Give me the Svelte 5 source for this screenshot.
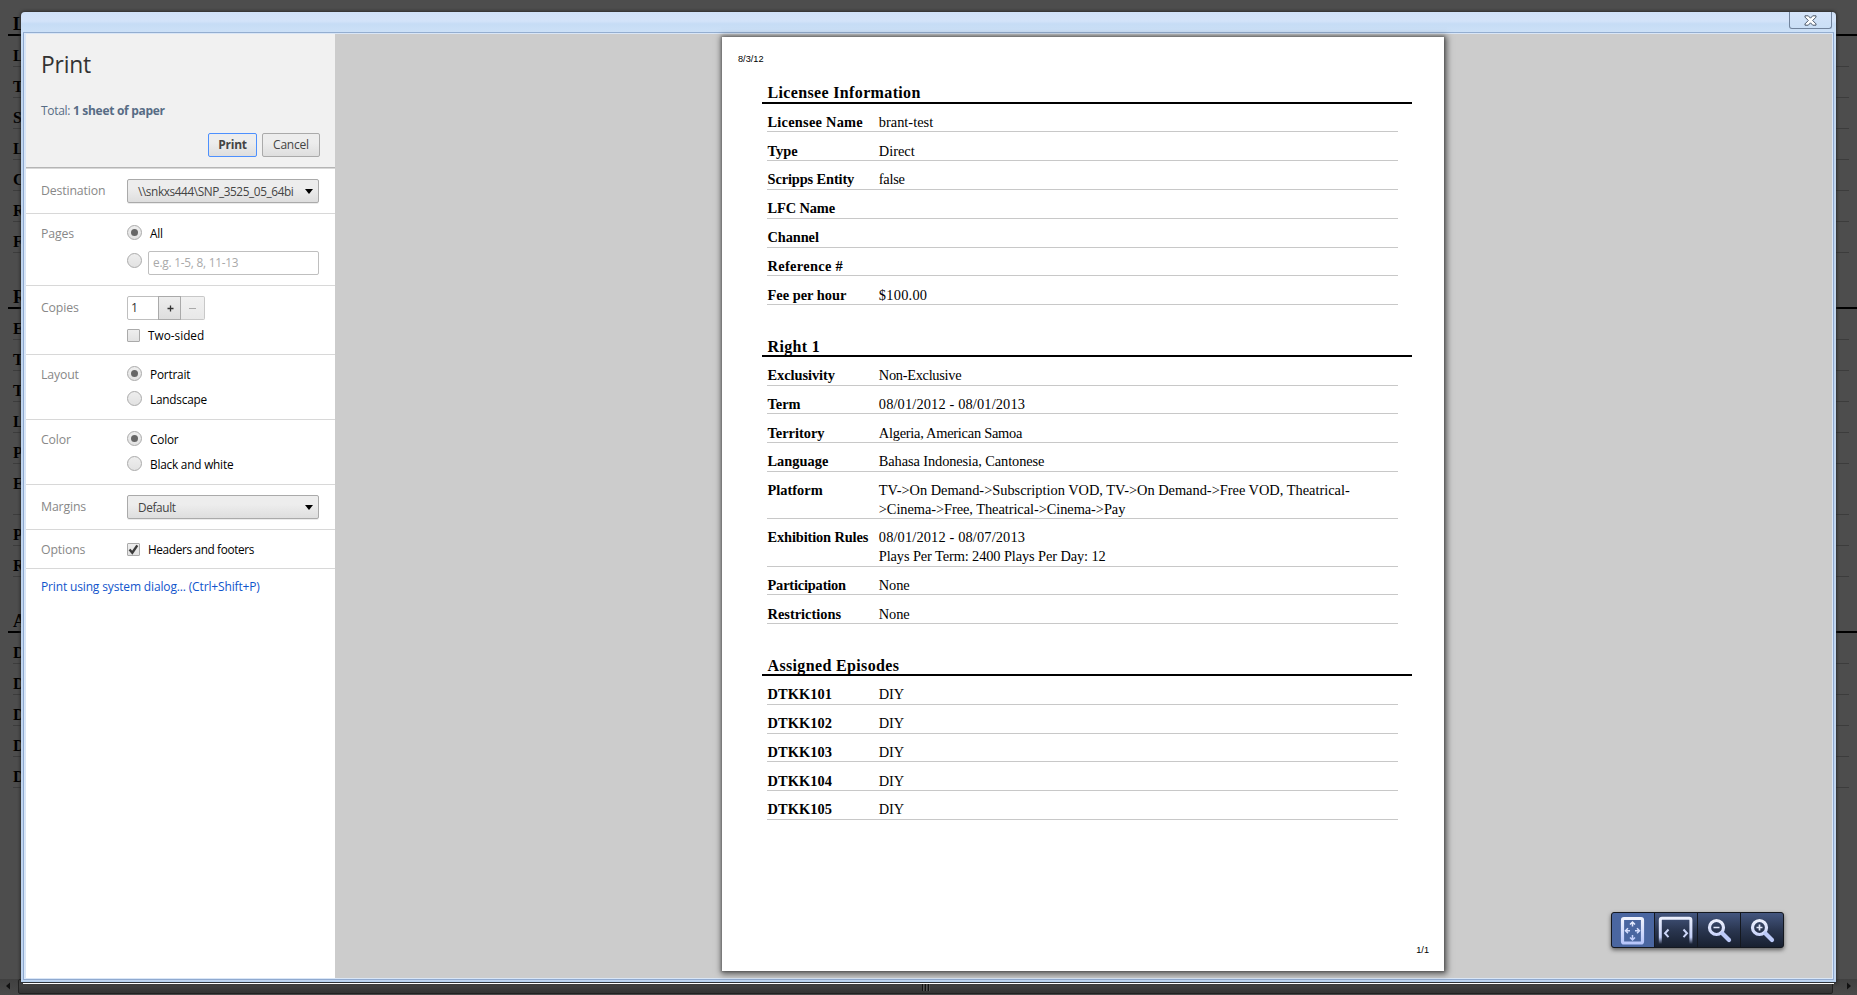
<script>
  // Each row: label, value lines, label tracking, value tracking (px)
  const sections = [
    {
      title: 'Licensee Information',
      rows: [
        ['Licensee Name', ['brant-test'], 0.24, 0],
        ['Type', ['Direct'], 0, 0],
        ['Scripps Entity', ['false'], -0.12, -0.25],
        ['LFC Name', [''], -0.1, 0],
        ['Channel', [''], -0.1, 0],
        ['Reference #', [''], 0.32, 0],
        ['Fee per hour', ['$100.00'], 0, 0.25]
      ]
    },
    {
      title: 'Right 1',
      rows: [
        ['Exclusivity', ['Non-Exclusive'], -0.05, -0.3],
        ['Term', ['08/01/2012 - 08/01/2013'], 0, 0.14],
        ['Territory', ['Algeria, American Samoa'], 0, -0.25],
        ['Language', ['Bahasa Indonesia, Cantonese'], 0, -0.1],
        ['Platform', ['TV->On Demand->Subscription VOD, TV->On Demand->Free VOD, Theatrical-', '>Cinema->Free, Theatrical->Cinema->Pay'], 0, -0.01, -0.06],
        ['Exhibition Rules', ['08/01/2012 - 08/07/2013', 'Plays Per Term: 2400 Plays Per Day: 12'], -0.13, 0.14, -0.11],
        ['Participation', ['None'], -0.18, -0.1],
        ['Restrictions', ['None'], 0, -0.1]
      ]
    },
    {
      title: 'Assigned Episodes',
      rows: ['DTKK101', 'DTKK102', 'DTKK103', 'DTKK104', 'DTKK105'].map((id) => [id, ['DIY'], 0.08, -0.1])
    }
  ];
</script>

<div class="screen">
  <div class="behind" aria-hidden="true">
    {#each sections as s}
      <div class="bsec">
        <div class="bhead">{s.title[0]}</div>
        {#each s.rows as r}
          <div class="brow" class:tall={r[0] === 'Exhibition Rules'}>{r[0][0]}</div>
        {/each}
      </div>
    {/each}
  </div>
  <div class="scroll">
    <svg class="arr" width="18" height="16"><path d="M10 3.5v7L6 7z" fill="#111" /></svg>
    <div class="thumb"><i></i><i></i><i></i></div>
    <svg class="arr" width="24" height="16"><path d="M14 3.5v7L18 7z" fill="#111" /></svg>
  </div>

  <div class="window">
    <div class="titlebar">
      <div class="close">
        <svg width="13" height="11" viewBox="0 0 13 11">
          <path d="M1 .8h3.3l2.2 2.4L8.7.8H12v1.3L8.7 5.5 12 8.9v1.3H8.7L6.5 7.8l-2.2 2.4H1V8.9L4.3 5.5 1 2.1z" fill="#fff" stroke="#4b586a" stroke-width="1" />
        </svg>
      </div>
    </div>
    <div class="content">
      <div class="side">
        <div class="head">
          <h1>Print</h1>
          <div class="total">Total: <b>1 sheet of paper</b></div>
          <div class="btns">
            <button class="btn primary">Print</button>
            <button class="btn cancel">Cancel</button>
          </div>
        </div>
        <div class="row sel" style:height="46px">
          <span class="lab">Destination</span>
          <div class="select"><span class="dest">\\snkxs444\SNP_3525_05_64bi</span><i class="tri"></i></div>
        </div>
        <div class="row" style:height="72px">
          <span class="lab">Pages</span>
          <div class="opts">
            <div class="opt"><i class="radio on"></i><span>All</span></div>
            <div class="opt range"><i class="radio"></i><div class="inp">e.g. 1-5, 8, 11-13</div></div>
          </div>
        </div>
        <div class="row cop" style:height="69px">
          <span class="lab">Copies</span>
          <div class="opts">
            <div class="stepper">
              <div class="num">1</div>
              <div class="plus"><svg width="7" height="7"><path d="M3.5 .5v6M.5 3.5h6" stroke="#333" stroke-width="1.3" /></svg></div>
              <div class="minus"><svg width="7" height="7"><path d="M0 3.5h7" stroke="#aaa" stroke-width="1" /></svg></div>
            </div>
            <div class="opt chk two"><i class="box"></i><span>Two-sided</span></div>
          </div>
        </div>
        <div class="row" style:height="65px">
          <span class="lab">Layout</span>
          <div class="opts">
            <div class="opt"><i class="radio on"></i><span>Portrait</span></div>
            <div class="opt"><i class="radio"></i><span>Landscape</span></div>
          </div>
        </div>
        <div class="row" style:height="65px">
          <span class="lab">Color</span>
          <div class="opts">
            <div class="opt"><i class="radio on"></i><span>Color</span></div>
            <div class="opt"><i class="radio"></i><span>Black and white</span></div>
          </div>
        </div>
        <div class="row cop" style:height="45px">
          <span class="lab">Margins</span>
          <div class="select"><span>Default</span><i class="tri"></i></div>
        </div>
        <div class="row" style:height="39px">
          <span class="lab">Options</span>
          <div class="opt chk hf"><i class="box">
            <svg width="13" height="13" viewBox="0 0 13 13"><path d="M2.5 6.5l2.8 3.2L10.3 2.3" fill="none" stroke="#3c3c3c" stroke-width="2.4" /></svg>
          </i><span>Headers and footers</span></div>
        </div>
        <div class="link">Print using system dialog... (Ctrl+Shift+P)</div>
      </div>

      <div class="preview">
        <div class="paper">
          <div class="date">8/3/12</div>
          {#each sections as s}
            <div class="sec">
              <div class="sh">{s.title}</div>
              {#each s.rows as [k, v, kt, ...vt]}
                <div class="sr" class:dbl={v.length > 1}>
                  <b style:letter-spacing="{kt}px">{k}</b>
                  <div class="v">{#each v as line, i}<div style:letter-spacing="{vt[i]}px">{line}</div>{/each}</div>
                </div>
              {/each}
            </div>
          {/each}
          <div class="pageno">1/1</div>
        </div>

        <div class="tools">
          <div class="tool active">
            <svg width="42" height="34" viewBox="0 0 42 34">
              <defs>
                <linearGradient id="g" gradientUnits="userSpaceOnUse" x1="0" y1="4" x2="0" y2="32"><stop offset="0" stop-color="#f3f5fd" /><stop offset="1" stop-color="#b4c3fa" /></linearGradient>
                <linearGradient id="f" gradientUnits="userSpaceOnUse" x1="0" y1="4" x2="0" y2="31"><stop offset="0" stop-color="#eef1fd" /><stop offset=".75" stop-color="#c3cff8" /><stop offset="1" stop-color="#c3cff8" stop-opacity="0" /></linearGradient>
              </defs>
              <g fill="none" stroke="url(#g)">
                <rect x="10.5" y="5.5" width="20" height="24.5" rx="1.5" stroke-width="3.2" />
                <path d="M20.500 9v4.500M18 11.500L20.500 9l2.500 2.500M20.500 22v5M18 24.500l2.500 2.500 2.500-2.500M13.500 17.810l4.500-.01M16 15.300l-2.500 2.500 2.500 2.500M23 17.810l4.500-.01M25 15.300l2.500 2.500-2.500 2.500" stroke-width="1.5" />
              </g>
            </svg>
          </div>
          <div class="tool">
            <svg width="42" height="34" viewBox="0 0 42 34">
              <path d="M5.3 31V7q0-1.700 1.700-1.700h27.200q1.700 0 1.700 1.700v24" fill="none" stroke="url(#f)" stroke-width="3" />
              <path d="M13.500 16.500l-3.500 3.800 3.500 3.800M28.500 16.500l3.500 3.800-3.500 3.800" fill="none" stroke="#ccd6f8" stroke-width="2" />
            </svg>
          </div>
          <div class="tool">
            <svg width="42" height="34" viewBox="0 0 42 34">
              <circle cx="18.500" cy="14.500" r="7" fill="none" stroke="url(#g)" stroke-width="3.200" />
              <path d="M15.500 14.510l6-.01" stroke="#e4e9fc" stroke-width="1.700" />
              <path d="M24.500 20.500l6.500 6.500" stroke="#bccaf9" stroke-width="4.200" stroke-linecap="round" />
            </svg>
          </div>
          <div class="tool">
            <svg width="42" height="34" viewBox="0 0 42 34">
              <circle cx="18.500" cy="14.500" r="7" fill="none" stroke="url(#g)" stroke-width="3.200" />
              <path d="M15.500 14.510l6-.01M18.500 11.500v6" stroke="#e4e9fc" stroke-width="1.700" />
              <path d="M24.500 20.500l6.500 6.500" stroke="#bccaf9" stroke-width="4.200" stroke-linecap="round" />
            </svg>
          </div>
        </div>
      </div>
    </div>
  </div>
</div>

<style>
  :global(body) { background: #4d4d4d; }
  * { box-sizing: border-box; }
  .screen { position: relative; width: 1857px; height: 995px; overflow: hidden; background: #4d4d4d; display: flex; flex-direction: column; }

  .behind { height: 979px; overflow: hidden; font-family: 'Liberation Serif', serif; font-weight: bold; font-size: 16px; color: #000; padding: 13px 0 0 8px; }
  .bsec { margin-bottom: 33px; }
  .bhead { height: 23px; border-bottom: 2px solid #000; font-size: 18px; line-height: 23px; padding-left: 5px; }
  .brow { height: 31px; margin: 0 8px 0 5px; border-bottom: 1px solid #3c3c3c; line-height: 20px; padding-top: 10px; }
  .brow.tall { height: 51px; }

  .scroll { height: 16px; display: flex; background: linear-gradient(#404040, #4a4a4a); }
  .arr { flex: none; }
  .thumb { flex: 1; height: 15px; border: 1px solid #222; border-radius: 2px; background: linear-gradient(#4a4a4a, #333); display: flex; justify-content: center; gap: 1px; padding-top: 4px; }
  .thumb i { width: 2px; height: 7px; background: #111; border-right: 1px solid #555; }

  .window { position: absolute; left: 21px; top: 12px; width: 1815px; height: 970px; display: flex; flex-direction: column; padding: 0 2px 1px; border-radius: 4px 4px 0 0; background: linear-gradient(#d0e1f8, #d3e3f9 9px, #c6dcf5 12px, #cce0f7 20px, #c0d5ee 60px, #c0d5f0); border-bottom: 1px solid #b7d2f0; box-shadow: 0 1px 0 #2e3338, 0 0 3px 1px rgba(30, 30, 30, .7); }
  .window::after { content: ''; position: absolute; left: 2px; right: 2px; bottom: -3px; height: 1px; background: #fff; }
  .titlebar { height: 20px; flex: none; display: flex; justify-content: flex-end; }
  .close { width: 43px; height: 17px; margin-right: 2px; border: 1px solid #71839c; border-top: none; border-radius: 0 0 3px 3px; background: linear-gradient(#d5e4f9, #cadff6); display: flex; justify-content: center; align-items: center; }
  .content { flex: 1; min-height: 0; display: flex; background: #d9e6f7; border: 1px solid #8fa9cf; border-top-color: #94aed0; padding: 1px 1px 1px 2px; }

  .side { width: 309px; flex: none; background: #fff; font-family: 'Open Sans', sans-serif; font-size: 12.3px; letter-spacing: -.15px; color: #000; }
  .head { height: 134px; background: #f1f1f1; border-bottom: 1px solid #b5b5b5; box-shadow: 0 1px 0 #d8d8d8; padding: 15px 15px 0 15px; }
  h1 { margin: 0; font-weight: 400; font-size: 22.8px; line-height: 32px; letter-spacing: -.2px; color: #333; }
  .total { margin-top: 20px; line-height: 20px; font-size: 12px; color: #576C85; letter-spacing: -.3px; }
  .btns { display: flex; justify-content: flex-end; gap: 5px; margin-top: 12px; }
  .btn { height: 24px; border: 1px solid #aaa; border-radius: 2px; background: linear-gradient(#ededed, #ededed 38%, #dedede); font: 12px/20px 'Open Sans', sans-serif; letter-spacing: -.2px; color: #444; padding: 0; width: 58px; }
  .primary { width: 49px; font-weight: 700; border-color: #4d90fe; }
  .row { display: flex; padding: 8px 15px 0; border-bottom: 1px solid #d8d8d8; }
  .row.sel { padding-top: 11px; }
  .row.cop { padding-top: 10px; }
  .lab { width: 86px; flex: none; line-height: 24px; color: #888; }
  .opts { flex: 1; }
  .select { width: 192px; height: 24px; border: 1px solid #aaa; border-radius: 2px; background: linear-gradient(#ededed, #ededed 38%, #dedede); box-shadow: 0 1px 0 rgba(0, 0, 0, .08); color: #444; font-size: 11.8px; letter-spacing: -.35px; line-height: 21px; padding: 0 5px 0 10px; display: flex; justify-content: space-between; align-items: center; white-space: nowrap; }
  .dest { letter-spacing: -.4px; }
  .tri { border: 4.5px solid transparent; border-top: 5px solid #000; border-bottom: 0; }
  .opt { display: flex; align-items: flex-start; height: 25px; line-height: 23px; font-size: 11.8px; letter-spacing: -.2px; }
  .opt span { margin-left: 8px; }
  .hf { letter-spacing: -.35px; }
  .radio { width: 15px; height: 15px; margin-top: 3px; border-radius: 50%; border: 1px solid #aaa; background: linear-gradient(#eee, #e2e2e2); display: flex; align-items: center; justify-content: center; }
  .radio.on::after { content: ''; width: 7px; height: 7px; border-radius: 50%; background: #666; }
  .range { padding-top: 4px; height: 28px; }
  .range .radio { margin-top: 2px; }
  .inp { width: 171px; height: 24px; margin-left: 6px; border: 1px solid #bfbfbf; border-radius: 2px; color: #a9a9a9; line-height: 21px; padding-left: 4px; letter-spacing: -.22px; }
  .stepper { display: flex; height: 24px; }
  .num { width: 32px; border: 1px solid #bfbfbf; border-radius: 2px 0 0 2px; padding-left: 3px; line-height: 21px; color: #333; }
  .plus, .minus { width: 23px; margin-left: -1px; border: 1px solid #aaa; background: linear-gradient(#ededed, #dedede); display: flex; align-items: center; justify-content: center; padding-left: 2px; }
  .minus { width: 24px; margin-left: 0; border-color: #c8c8c8; border-left: none; background: linear-gradient(#f1f1f1, #e8e8e8); border-radius: 0 2px 2px 0; padding-left: 0; }
  .two { margin-top: 4px; letter-spacing: 0; }
  .chk .box { width: 13px; height: 13px; margin-top: 5px; border: 1px solid #aaa; border-radius: 1px; background: linear-gradient(#eee, #e2e2e2); }
  .box svg { display: block; margin: -1px; }
  .link { padding: 7px 15px; line-height: 22px; color: #15c; font-size: 12px; letter-spacing: -.15px; }

  .preview { flex: 1; background: #ccc; padding: 3px 0 0 387px; position: relative; }
  .paper { width: 722px; height: 934px; background: #fff; box-shadow: 0 0 2px 1px rgba(0, 0, 0, .2), 1px 1px 6px 2px rgba(0, 0, 0, .55); font-family: 'Liberation Serif', serif; color: #000; display: flex; flex-direction: column; padding: 14px 0 0 40px; }
  .date { font: 9.2px/16px 'Liberation Sans', sans-serif; height: 31.05px; margin-left: -24px; }
  .sec { margin-bottom: 30.15px; width: 650px; }
  .sh { height: 22px; border-bottom: 2px solid #000; font-weight: bold; font-size: 16px; line-height: 22px; letter-spacing: .35px; padding: .2px 0 0 5.5px; white-space: nowrap; }
  .sr { display: flex; height: 28.8px; margin: 0 14px 0 5px; border-bottom: 1px solid #c8c8c8; font-size: 14.4px; line-height: 19px; padding: 9.2px 0 0 .5px; }
  .sr:nth-child(2) { height: 28.35px; padding-top: 8.9px; }
  .sr.dbl { height: 47.3px; padding-top: 9px; }
  .sr b { width: 111.3px; flex: none; white-space: nowrap; }
  .v { white-space: nowrap; }
  .pageno { font: 9.2px/16px 'Liberation Sans', sans-serif; margin: auto 15px 13px auto; }

  .tools { position: absolute; left: 1276px; top: 878px; display: flex; width: 173px; height: 36px; border: 1px solid #14181f; border-radius: 3px; background: #14181f; gap: 1px; overflow: hidden; box-shadow: 0 2px 4px rgba(0, 0, 0, .55); }
  .tool { width: 42px; height: 34px; background: linear-gradient(#44567f, #2a3650 50%, #182030); }
  .tool.active { background: #4a66a0; }
  svg { display: block; }
</style>
